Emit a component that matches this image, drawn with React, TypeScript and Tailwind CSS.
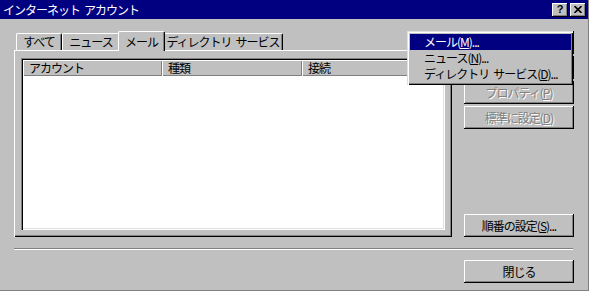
import React from "react";

const RAISED =
  "shadow-[inset_-1px_-1px_0_#000,inset_1px_1px_0_#fff,inset_-2px_-2px_0_#808080]";

function Btn({
  children,
  disabled,
}: {
  children?: React.ReactNode;
  disabled?: boolean;
}) {
  return (
    <div
      className={`w-[110px] h-[23px] flex items-center justify-center bg-[#c0c0c0] shadow-[inset_-1px_-1px_0_#000,inset_1px_1px_0_#fff,inset_-2px_-2px_0_#808080] ${
        disabled ? "text-[#808080] [text-shadow:1px_1px_0_#fff]" : "text-black"
      }`}
    >
      {children}
    </div>
  );
}

function Tab({
  label,
  width,
  active,
}: {
  label: React.ReactNode;
  width: string;
  active?: boolean;
}) {
  if (active) {
    return (
      <div
        className={`${width} relative z-10 -mx-[2px] -mb-[1px] h-[20px] flex items-center justify-center bg-[#c0c0c0] border-l border-t border-r border-l-white border-t-white border-r-black rounded-tl-[2px] rounded-tr-[2px] shadow-[inset_-1px_0_0_#808080]`}
      >
        {label}
      </div>
    );
  }
  return (
    <div
      className={`${width} h-[17px] flex items-center justify-center border-l border-t border-r border-l-white border-t-white border-r-black rounded-tl-[2px] rounded-tr-[2px] shadow-[inset_-1px_0_0_#808080]`}
    >
      {label}
    </div>
  );
}

const HEADERS = [
  { key: 0, title: "アカウント", w: "w-[139px]" },
  { key: 1, title: "種類", w: "w-[140px]" },
  { key: 2, title: "接続", w: "flex-1" },
];

export default function App() {
  return (
    <div className="relative w-[589px] h-[291px] flex flex-col bg-[#c0c0c0] border-r border-b border-[#808080] text-[12px] leading-[14px] tracking-[-1px] text-black font-['Noto_Sans_CJK_JP','Noto_Sans_CJK_SC',sans-serif]">
      {/* タイトルバー */}
      <div className="h-[19px] flex items-center justify-between bg-[#000080] pl-[3px] pr-[2px]">
        <span className="text-white">
          インターネット<span className="ml-[4px]">アカウント</span>
        </span>
        <div className="flex gap-[2px]">
          <div
            className={`w-[16px] h-[14px] flex items-center justify-center bg-[#c0c0c0] ${RAISED}`}
          >
            <span className="font-bold text-[11px] leading-none tracking-normal font-['Liberation_Sans',sans-serif]">
              ?
            </span>
          </div>
          <div
            className={`w-[16px] h-[14px] flex items-center justify-center bg-[#c0c0c0] ${RAISED}`}
          >
            <svg width="8" height="7" viewBox="0 0 8 7">
              <path d="M0.5 0 L7.5 7 M7.5 0 L0.5 7" stroke="#000" strokeWidth="1.6" />
            </svg>
          </div>
        </div>
      </div>

      {/* 本体 */}
      <div className="flex pl-[14px] pt-[12px] gap-[12px]">
        <div className="w-[438px] flex flex-col">
          <div className="h-[19px] flex items-end pl-[2px]">
            <Tab label="すべて" width="w-[46px]" />
            <Tab label="ニュース" width="w-[58px]" />
            <Tab label="メール" width="w-[47px]" active />
            <Tab
              label={
                <>
                  ディレクトリ<span className="ml-[4px]">サービス</span>
                </>
              }
              width="w-[120px]"
            />
          </div>
          <div className="h-[187px] pl-[7px] pt-[8px] pr-[7px] pb-[7px] shadow-[inset_1px_1px_0_#fff,inset_-1px_-1px_0_#000,inset_-2px_-2px_0_#808080]">
            {/* リスト */}
            <div className="w-[424px] h-[172px] bg-white p-[2px] shadow-[inset_1px_1px_0_#808080,inset_2px_2px_0_#000,inset_-1px_-1px_0_#fff,inset_-2px_-2px_0_#dfdfdf]">
              <div className="flex h-[16px]">
                {HEADERS.map((item) => (
                  <div
                    key={item.key}
                    className={`${item.w} h-[16px] flex items-center pl-[6px] bg-[#c0c0c0] shadow-[inset_1px_1px_0_#fff,inset_-1px_-1px_0_#808080]`}
                  >
                    {item.title}
                  </div>
                ))}
              </div>
            </div>
          </div>
        </div>

        {/* ボタン列 (上の2つはメニューの下に隠れている) */}
        <div className="h-[206px] flex flex-col justify-between">
          <div className="flex flex-col gap-[2px]">
            <Btn />
            <Btn />
            <Btn disabled>
              プロパティ(<span className="underline">P</span>)
            </Btn>
            <Btn disabled>
              標準に設定(<span className="underline">D</span>)
            </Btn>
          </div>
          <Btn>
            順番の設定(<span className="underline">S</span>)...
          </Btn>
        </div>
      </div>

      {/* 区切り線 */}
      <div className="ml-[14px] mt-[11px] w-[559px] h-[2px] border-t border-b border-t-[#808080] border-b-white" />

      <div className="ml-[464px] mt-[10px]">
        <Btn>閉じる</Btn>
      </div>

      {/* ポップアップメニュー */}
      <div className="absolute left-[407px] top-[31px] w-[166px] pl-[3px] pr-[2px] pt-[3px] pb-[3px] bg-[#c0c0c0] shadow-[inset_1px_1px_0_#dfdfdf,inset_2px_2px_0_#fff,inset_-1px_-1px_0_#000,inset_-2px_-2px_0_#808080]">
        <div className="h-[16px] flex items-center pl-[14px] bg-[#000080] text-white">
          メール(<span className="underline">M</span>)...
        </div>
        <div className="h-[16px] flex items-center pl-[14px]">
          ニュース(<span className="underline">N</span>)...
        </div>
        <div className="h-[16px] flex items-center pl-[14px]">
          ディレクトリ<span className="ml-[4px]">サービス(</span>
          <span className="underline">D</span>)...
        </div>
      </div>
    </div>
  );
}
